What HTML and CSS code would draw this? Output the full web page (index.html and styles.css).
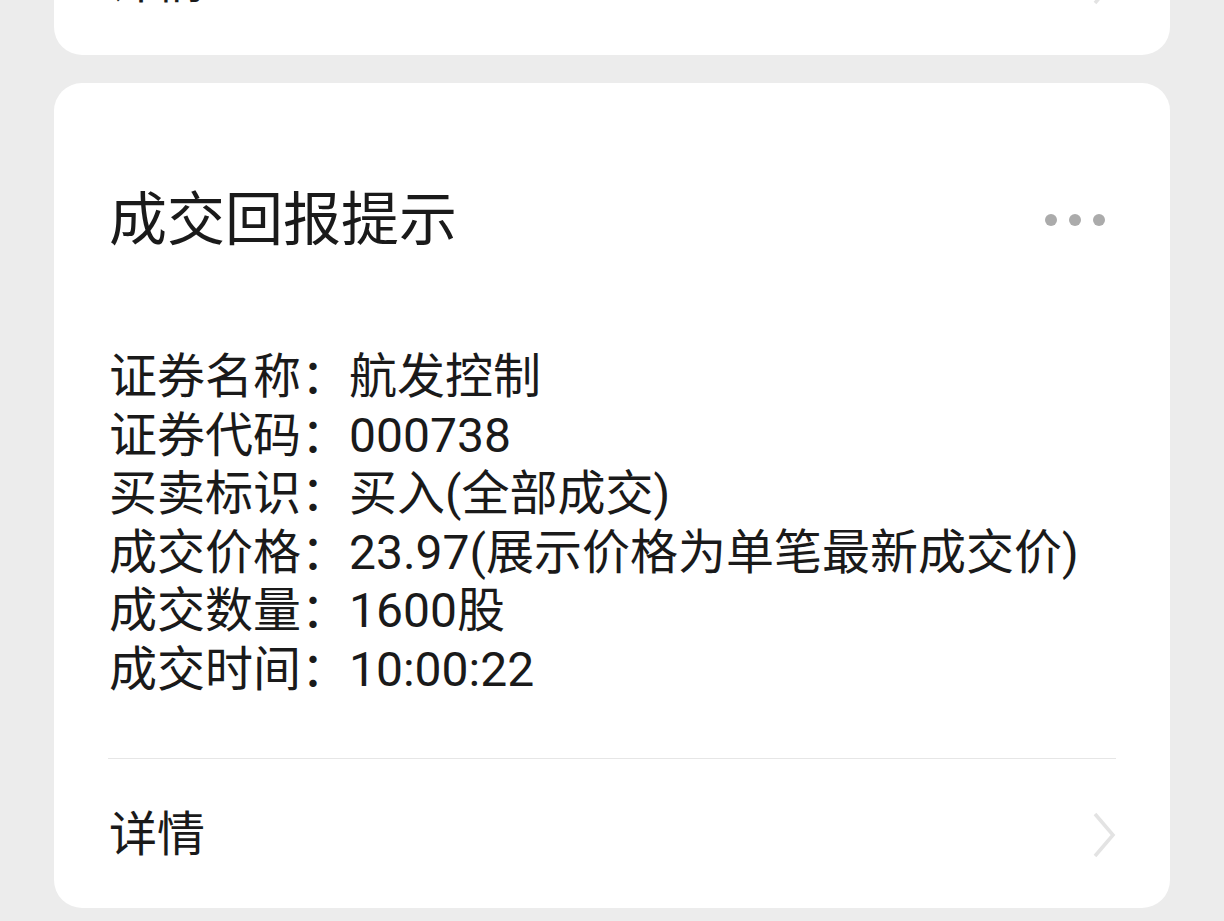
FILE: index.html
```html
<!DOCTYPE html>
<html lang="zh-CN">
<head>
    <meta charset="utf-8" />
    <meta name="viewport" content="width=device-width, initial-scale=1" />
    <title>成交回报提示</title>
    <link rel="stylesheet" href="styles.css">
</head>
<body>
    <div class="feed">
        <div class="card">
            <div class="card-footer">
                <span class="footer-label">详情</span>
                <svg class="chevron" viewBox="0 0 24 46" width="24" height="46">
                    <path d="M3 2 L21 23 L3 44" fill="none" stroke="#e3e3e3" stroke-width="3.5" />
                </svg>
            </div>
        </div>

        <div class="card">
            <div class="card-header">
                <h1 class="card-title">成交回报提示</h1>
                <div class="more-dots">
                    <span></span><span></span><span></span>
                </div>
            </div>

            <div class="info-list">
                <div class="info-row"><span class="info-label">证券名称：</span><span>航发控制</span></div>
                <div class="info-row"><span class="info-label">证券代码：</span><span>000738</span></div>
                <div class="info-row"><span class="info-label">买卖标识：</span><span>买入(全部成交)</span></div>
                <div class="info-row"><span class="info-label">成交价格：</span><span>23.97(展示价格为单笔最新成交价)</span></div>
                <div class="info-row"><span class="info-label">成交数量：</span><span>1600股</span></div>
                <div class="info-row"><span class="info-label">成交时间：</span><span>10:00:22</span></div>
            </div>

            <div class="divider"></div>

            <div class="card-footer">
                <span class="footer-label">详情</span>
                <svg class="chevron" viewBox="0 0 24 46" width="24" height="46">
                    <path d="M3 2 L21 23 L3 44" fill="none" stroke="#e3e3e3" stroke-width="3.5" />
                </svg>
            </div>
        </div>
    </div>
</body>
</html>
```

FILE: styles.css
```css
* {
    margin: 0;
    padding: 0;
    box-sizing: border-box;
}

body {
    font-family: Roboto, "Noto Sans CJK SC", sans-serif;
    background: #ececec;
    color: #1a1a1a;
    overflow: hidden;
    height: 921px;
}

.feed {
    display: flex;
    flex-direction: column;
    gap: 28px;
    padding: 0 54px;
    margin-top: -94px;
}

.card {
    background: #fff;
    border-radius: 28px;
    padding: 0 54px 0 55px;
}

.card-header {
    display: flex;
    align-items: center;
    justify-content: space-between;
    padding-top: 108px;
}

.card-title {
    font-size: 58px;
    font-weight: 400;
    line-height: 58px;
}

.more-dots {
    display: flex;
    gap: 12px;
    margin-right: 11px;
}

.more-dots span {
    width: 12px;
    height: 12px;
    border-radius: 50%;
    background: #ababab;
}

.info-list {
    margin-top: 99px;
    font-size: 48px;
    line-height: 58.5px;
}

.info-row {
    display: flex;
    white-space: nowrap;
}

.info-label {
    width: 240px;
    flex-shrink: 0;
}

.divider {
    margin-top: 59px;
    height: 1px;
    background: #e6e6e6;
    margin-left: -1px;
}

.card-footer {
    display: flex;
    align-items: center;
    justify-content: space-between;
    padding: 47px 0 44px;
}

.footer-label {
    font-size: 48px;
    line-height: 58px;
}

.chevron {
    display: block;
}
```
